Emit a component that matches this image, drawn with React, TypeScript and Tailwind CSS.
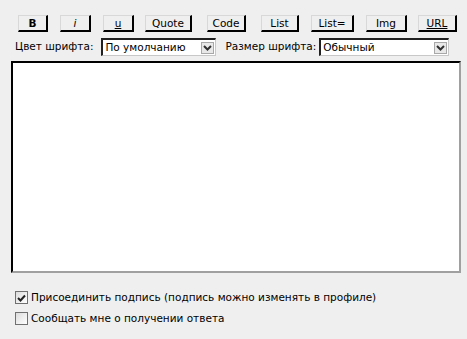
import React from "react";

const buttons = [
  { label: "B", w: "w-[30px]", ml: "ml-[18px]", cls: "font-bold" },
  { label: "i", w: "w-[31px]", ml: "ml-[12px]", cls: "italic" },
  { label: "u", w: "w-[31px]", ml: "ml-[12px]", cls: "underline" },
  { label: "Quote", w: "w-[47px]", ml: "ml-[11px]", cls: "" },
  { label: "Code", w: "w-[39px]", ml: "ml-[15px]", cls: "" },
  { label: "List", w: "w-[38px]", ml: "ml-[15px]", cls: "" },
  { label: "List=", w: "w-[43px]", ml: "ml-[12px]", cls: "" },
  { label: "Img", w: "w-[41px]", ml: "ml-[12px]", cls: "" },
  { label: "URL", w: "w-[39px]", ml: "ml-[11px]", cls: "underline" },
];

const Arrow = () => (
  <div className="w-[13px] h-[12px] border border-[#a8a8a8] bg-[#e8e8e8] flex items-center justify-center">
    <svg width="9" height="6" viewBox="0 0 9 6">
      <path d="M1 1 L4.5 4.5 L8 1" fill="none" stroke="#303030" strokeWidth="2" />
    </svg>
  </div>
);

const FakeSelect = ({ value, w }: { value: string; w: string }) => (
  <div
    className={`${w} h-[18px] bg-white border-t-2 border-l-2 border-[#202020] border-b border-r border-b-[#c8c8c8] border-r-[#c8c8c8] flex items-center justify-between pl-[2px] pr-[1px]`}
  >
    <span>{value}</span>
    <Arrow />
  </div>
);

const Check = ({ checked }: { checked?: boolean }) => (
  <div className="w-[13px] h-[13px] border border-[#707070] bg-gradient-to-br from-[#dcdcdc] to-white flex items-center justify-center">
    {checked && (
      <svg width="9" height="8" viewBox="0 0 9 8">
        <path d="M1 4 L3.5 6.5 L8 1.5" fill="none" stroke="#222" strokeWidth="2" />
      </svg>
    )}
  </div>
);

const App = () => {
  return (
    <div
      className="w-[467px] h-[339px] bg-[#efefef] text-[10.5px] text-black overflow-hidden"
      style={{ fontFamily: '"DejaVu Sans", Verdana, sans-serif' }}
    >
      <div className="flex pt-[15px]">
        {buttons.map((b) => (
          <div
            key={b.label}
            className={`${b.w} ${b.ml} h-[17px] border-t border-l border-[#d8d8d8] border-b-2 border-r-2 border-b-black border-r-black bg-[#efefef] flex items-center justify-center leading-none ${b.cls}`}
          >
            {b.label}
          </div>
        ))}
      </div>
      <div className="flex items-center mt-[6px] ml-[15px]">
        <span className="mr-[8px]">Цвет шрифта:</span>
        <FakeSelect value="По умолчанию" w="w-[115px]" />
        <span className="ml-[9px] mr-[3px]">Размер шрифта:</span>
        <FakeSelect value="Обычный" w="w-[130px]" />
      </div>
      <div className="ml-[11px] mt-[5px] w-[450px] h-[212px] bg-white border-t-2 border-l-2 border-black border-b-2 border-r-2 border-b-[#a0a0a0] border-r-[#a0a0a0]" />
      <div className="ml-[15px] mt-[17px] flex flex-col gap-[5px]">
        <label className="flex items-center gap-[3px]">
          <Check checked />
          <span>Присоединить подпись (подпись можно изменять в профиле)</span>
        </label>
        <label className="flex items-center gap-[3px]">
          <Check />
          <span>Сообщать мне о получении ответа</span>
        </label>
      </div>
    </div>
  );
};

export default App;
